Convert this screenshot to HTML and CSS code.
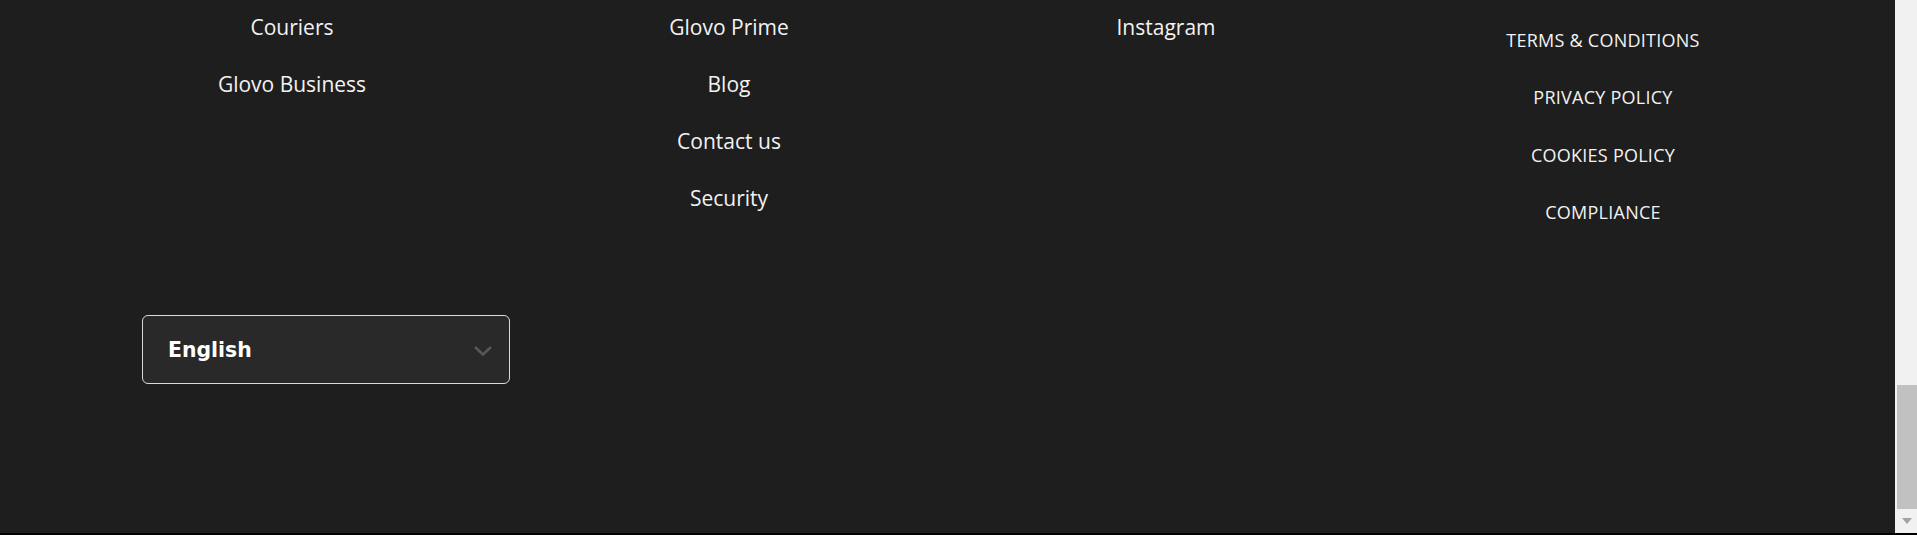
FILE: index.html
```html
<!DOCTYPE html>
<html lang="en">
<head>
<meta charset="utf-8">
<title>Glovo footer</title>
<link rel="stylesheet" href="styles.css">
</head>
<body>
<div class="window">
  <main class="page">
    <footer class="footer">
      <div class="columns">
        <ul class="col">
          <li><a href="#">Couriers</a></li>
          <li><a href="#">Glovo Business</a></li>
        </ul>
        <ul class="col">
          <li><a href="#">Glovo Prime</a></li>
          <li><a href="#">Blog</a></li>
          <li><a href="#">Contact us</a></li>
          <li><a href="#">Security</a></li>
        </ul>
        <ul class="col">
          <li><a href="#">Instagram</a></li>
        </ul>
        <ul class="col col-legal">
          <li><a href="#">TERMS &amp; CONDITIONS</a></li>
          <li><a href="#">PRIVACY POLICY</a></li>
          <li><a href="#">COOKIES POLICY</a></li>
          <li><a href="#">COMPLIANCE</a></li>
        </ul>
      </div>
      <div class="lang">
        <div class="select">
          <span class="select-label">English</span>
          <svg class="chevron" width="18" height="10" viewBox="0 0 18 10" aria-hidden="true"><path d="M1 1 L9 8.5 L17 1" fill="none" stroke="#575757" stroke-width="2.6"/></svg>
        </div>
      </div>
    </footer>
  </main>
  <div class="scrollbar">
    <div class="track-space"></div>
    <div class="thumb"></div>
    <div class="arrow-box"><span class="arrow"></span></div>
  </div>
</div>
</body>
</html>
```
FILE: styles.css
```css
html, body {
  margin: 0;
  padding: 0;
}
body {
  background: #000000;
  font-family: "Open Sans", "Noto Sans", sans-serif;
  overflow: hidden;
}
.window {
  display: flex;
  height: 533px;
}
.page {
  flex: 1;
  background: #1e1e1e;
  min-width: 0;
}
.footer {
  width: 1748px;
  margin: 0 auto;
  padding-top: 15px;
}
.columns {
  display: grid;
  grid-template-columns: repeat(4, 1fr);
  height: 223px;
}
.col {
  list-style: none;
  margin: 0;
  padding: 0;
  display: flex;
  flex-direction: column;
  align-items: center;
  gap: 33px;
}
.col li {
  line-height: 24px;
  font-size: 21px;
}
.col a {
  color: #f2f2f2;
  text-decoration: none;
}
.col-legal {
  padding-top: 13px;
  gap: 33.3px;
}
.col-legal li {
  font-size: 18px;
  letter-spacing: 0.25px;
}
.lang {
  padding: 77px 0 0 68.5px;
}
.select {
  box-sizing: border-box;
  width: 368px;
  height: 69px;
  border: 1px solid #d9d9d9;
  border-radius: 6px;
  background: #292929;
  display: flex;
  align-items: center;
  justify-content: space-between;
  padding: 0 17px 0 25px;
}
.select-label {
  color: #ffffff;
  font-family: "DejaVu Sans", "Open Sans", sans-serif;
  font-size: 20.4px;
  font-weight: 700;
  line-height: 24px;
  margin-top: 1px;
}
.chevron {
  display: block;
  margin-top: 2px;
}
.scrollbar {
  width: 22px;
  flex: none;
  background: #f1f1f1;
  display: flex;
  flex-direction: column;
}
.track-space {
  height: 385px;
}
.thumb {
  height: 124px;
  margin-left: 2px;
  background: #c1c1c1;
}
.arrow-box {
  flex: 1;
  display: flex;
  justify-content: center;
  padding-top: 9px;
  padding-left: 2px;
}
.arrow {
  width: 0;
  height: 0;
  border-left: 5px solid transparent;
  border-right: 5px solid transparent;
  border-top: 6px solid #a3a3a3;
}
```
